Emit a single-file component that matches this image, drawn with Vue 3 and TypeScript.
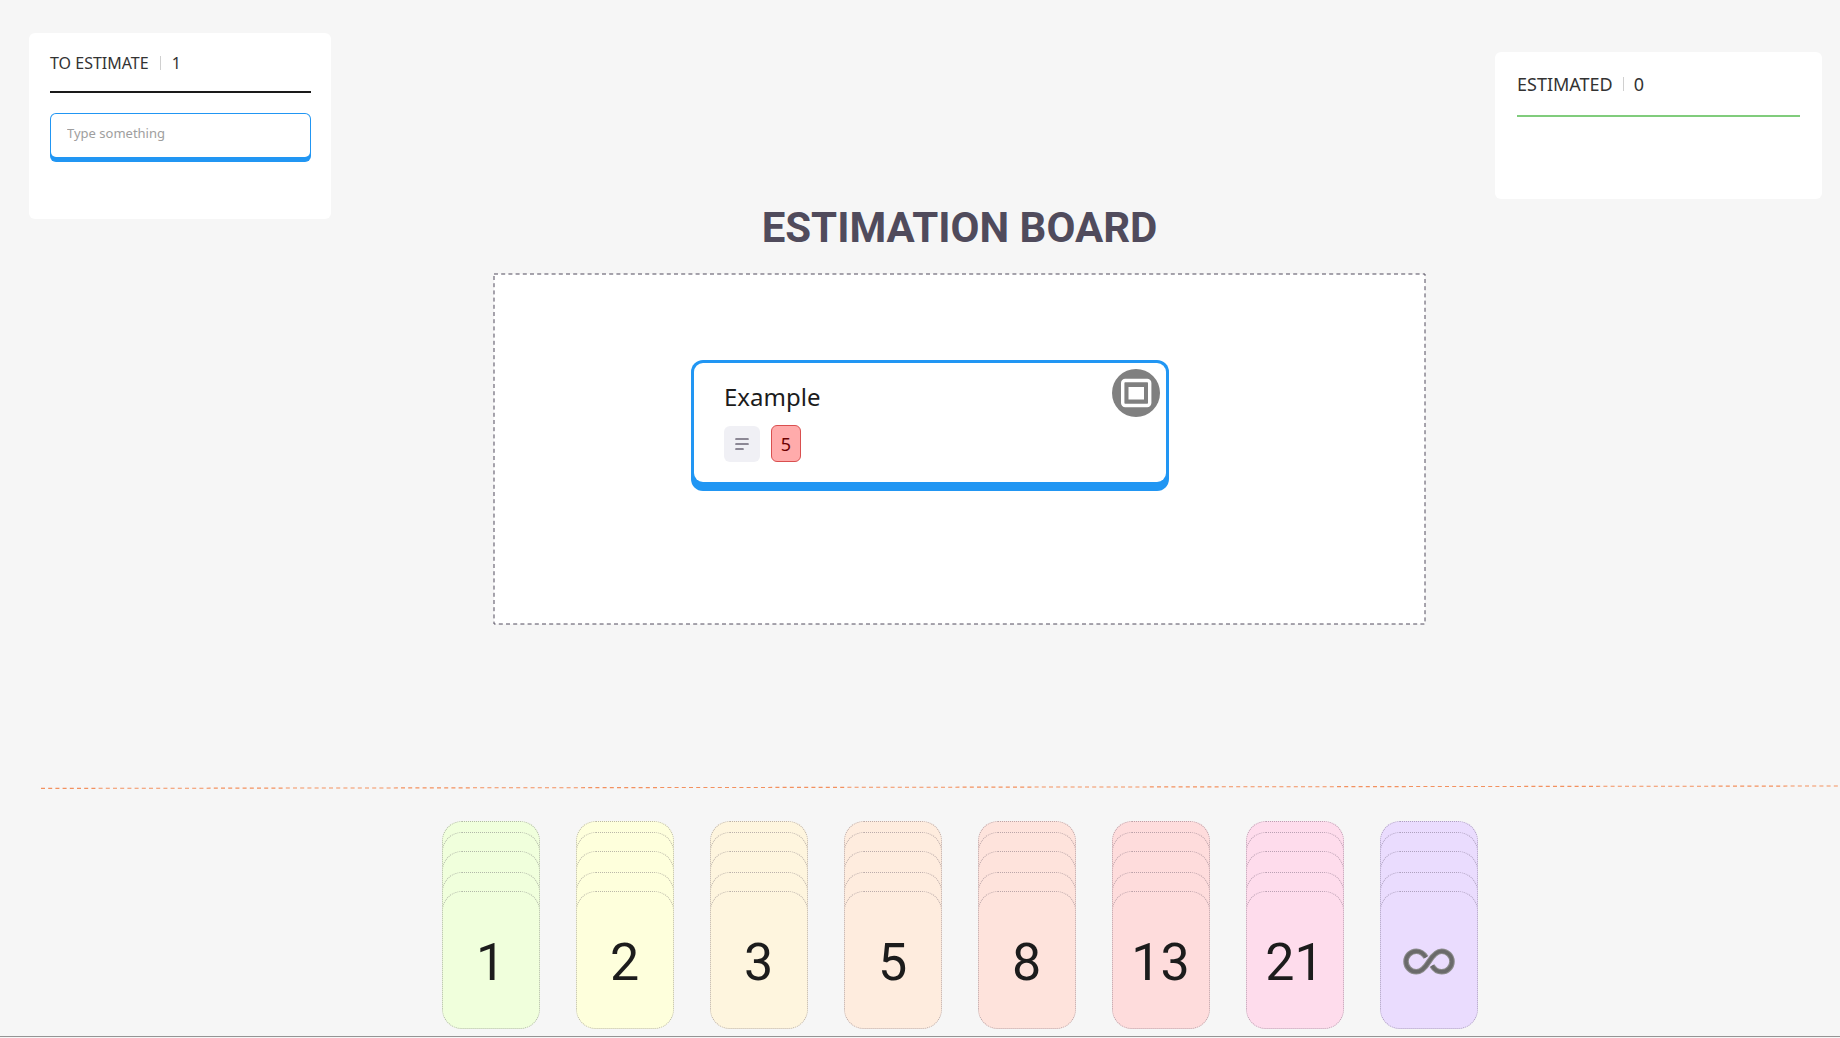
<script setup lang="ts">
import { ref } from 'vue'

interface Deck {
  label: string
  color: string
}

const draft = ref('')

const decks: Deck[] = [
  { label: '1', color: '#f0ffdc' },
  { label: '2', color: '#feffdc' },
  { label: '3', color: '#fef5de' },
  { label: '5', color: '#feecde' },
  { label: '8', color: '#fee3dc' },
  { label: '13', color: '#fedcdc' },
  { label: '21', color: '#fedcec' },
  { label: '∞', color: '#eadcfe' },
]
</script>

<template>
  <div class="page">
    <main class="top">
      <section class="panel todo">
        <h2 class="panel-head">
          <span>TO ESTIMATE</span><span class="sep"></span><span>1</span>
        </h2>
        <div class="field">
          <input v-model="draft" type="text" placeholder="Type something" aria-label="New item" />
        </div>
      </section>

      <section class="center">
        <h1>ESTIMATION BOARD</h1>
        <div class="board">
          <svg class="frame" aria-hidden="true">
            <rect width="100%" height="100%" />
          </svg>
          <article class="task">
            <div class="task-body">
              <div>
                <h3>Example</h3>
                <div class="chips">
                  <span class="chip">
                    <svg width="14" height="12" viewBox="0 0 14 12" aria-hidden="true">
                      <path d="M1 1H13M1 6H13M1 11H8" fill="none" stroke="#6b6676" stroke-width="1.7" stroke-linecap="round" />
                    </svg>
                  </span>
                  <span class="points">5</span>
                </div>
              </div>
              <button class="expand" type="button" aria-label="Open card">
                <svg width="48" height="48" viewBox="0 0 48 48" aria-hidden="true">
                  <circle cx="24" cy="24" r="24" fill="#808080" />
                  <rect x="10.7" y="11.5" width="27" height="25" rx="2.5" fill="none" stroke="#fff" stroke-width="3.4" />
                  <rect x="16.5" y="18" width="15.5" height="12.5" fill="#fff" />
                </svg>
              </button>
            </div>
          </article>
        </div>
      </section>

      <section class="panel done">
        <h2 class="panel-head">
          <span>ESTIMATED</span><span class="sep"></span><span>0</span>
        </h2>
      </section>
    </main>

    <svg class="divider" aria-hidden="true">
      <line x1="0" y1="3.4" x2="100%" y2="1" />
    </svg>

    <section class="decks">
      <div v-for="deck in decks" :key="deck.label" class="stack" :style="{ '--tint': deck.color }">
        <span class="sheet"></span>
        <span class="sheet second"></span>
        <span class="sheet third"></span>
        <span class="sheet fourth"></span>
        <button v-if="deck.label !== '∞'" class="sheet front" type="button">{{ deck.label }}</button>
        <button v-else class="sheet front" type="button" aria-label="Infinity">
          <svg width="52" height="30" viewBox="0 0 52 30" aria-hidden="true">
            <g fill="none">
              <path
                d="M23 9.4C20.6 5.4 17.4 3.2 13.3 3.2A10.3 10.3 0 0 0 13.3 23.8C18.6 23.8 22 20 26 13.5C30 7 33.4 3.2 38.7 3.2A10.3 10.3 0 0 1 38.7 23.8C34.6 23.8 31.4 21.6 29 17.6"
                stroke="#8c8c8c"
                stroke-width="5.6"
              />
              <path
                d="M23 9.4C20.6 5.4 17.4 3.2 13.3 3.2A10.3 10.3 0 0 0 13.3 23.8C18.6 23.8 22 20 26 13.5C30 7 33.4 3.2 38.7 3.2A10.3 10.3 0 0 1 38.7 23.8C34.6 23.8 31.4 21.6 29 17.6"
                stroke="#6a6a6a"
                stroke-width="3.4"
              />
            </g>
          </svg>
        </button>
      </div>
    </section>
  </div>
</template>

<style>
body {
  background: #f6f6f6;
}
</style>

<style scoped>
* {
  box-sizing: border-box;
}

.page {
  display: flex;
  flex-direction: column;
  min-height: 100vh;
  padding-bottom: 1px;
  background: #f6f6f6;
  font-family: "Noto Sans", sans-serif;
  color: #1c1c1c;
}

h1,
h2,
h3 {
  margin: 0;
}

.top {
  display: grid;
  grid-template-columns: 302px 1fr 327px;
  align-items: start;
  padding: 0 18px 0 29px;
}

.panel {
  background: #fff;
  border-radius: 6px;
}

.todo {
  margin-top: 33px;
  padding: 18px 20px 57px 21px;
  font-size: 16px;
}

.done {
  margin-top: 52px;
  padding: 20px 22px 82px;
  font-size: 18px;
}

.panel-head {
  display: flex;
  align-items: center;
  gap: 10px;
  font-size: inherit;
  font-weight: 400;
  line-height: 24px;
  color: #333;
}

.todo .panel-head {
  gap: 11px;
  padding-bottom: 16px;
  border-bottom: 2px solid #1a1a1a;
}

.done .panel-head {
  padding-bottom: 19px;
  border-bottom: 2px solid #80cc7c;
}

.sep {
  width: 1px;
  height: 14px;
  background: #d0d0d0;
}

.field {
  margin-top: 20px;
  padding: 1px 1px 5px;
  background: #2196f3;
  border-radius: 6px;
}

.field input {
  display: block;
  width: 100%;
  height: 43px;
  padding: 0 16px 6px;
  border: 0;
  border-radius: 5px;
  outline: 0;
  background: #fff;
  font-family: inherit;
  font-size: 13px;
  color: #333;
}

.field input::placeholder {
  color: #9e9e9e;
  opacity: 1;
}

.center {
  display: flex;
  flex-direction: column;
  align-items: center;
  padding: 203px 0 0 93px;
}

h1 {
  font-family: Roboto, sans-serif;
  font-size: 42px;
  font-weight: 700;
  line-height: 50px;
  color: #504b5c;
  white-space: nowrap;
}

.board {
  position: relative;
  width: 100%;
  max-width: 931px;
  margin-top: 21px;
  padding: 86px 0 133px;
  background: #fff;
}

.frame {
  position: absolute;
  inset: 0;
  width: 100%;
  height: 100%;
  overflow: visible;
}

.frame rect {
  fill: none;
  stroke: #504b5c;
  stroke-width: 1;
  stroke-dasharray: 4 3.2;
}

.task {
  position: relative;
  width: 478px;
  margin-left: 197px;
  padding: 3px 3px 9px;
  background: #2196f3;
  border-radius: 12px;
}

.task-body {
  display: flex;
  justify-content: space-between;
  align-items: flex-start;
  height: 119px;
  padding: 6px 6px 0 30px;
  background: #fff;
  border-radius: 9px;
}

h3 {
  margin-top: 12px;
  font-size: 24px;
  font-weight: 400;
  line-height: 32px;
}

.chips {
  display: flex;
  align-items: center;
  gap: 11px;
  margin-top: 12px;
}

.chip {
  display: grid;
  place-items: center;
  width: 36px;
  height: 36px;
  background: #f0f0f5;
  border-radius: 6px;
}

.points {
  display: grid;
  place-items: center;
  width: 30px;
  height: 37px;
  background: #ffabab;
  border: 1px solid #d94f4f;
  border-radius: 6px;
  font-size: 18px;
  color: #6b0000;
}

.expand {
  padding: 0;
  border: 0;
  background: none;
}

.expand svg {
  display: block;
}

.divider {
  flex: none;
  width: calc(100% - 41px);
  height: 5px;
  margin: 161px 0 0 41px;
}

.divider line {
  stroke: #f3915f;
  stroke-width: 1.1;
  stroke-dasharray: 4 3.2;
}

.decks {
  display: flex;
  justify-content: center;
  gap: 36px;
  margin-top: 31px;
  padding: 0 0 7px 79px;
  border-bottom: 1px solid #949494;
}

.stack {
  display: grid;
  grid-template-columns: 98px;
  align-items: start;
}

.sheet {
  grid-area: 1 / 1;
  height: 138px;
  background: var(--tint);
  border: 1px dotted rgba(70, 60, 80, 0.36);
  border-radius: 20px;
}

.second {
  margin-top: 11px;
}

.third {
  margin-top: 30px;
}

.fourth {
  margin-top: 51px;
}

.front {
  display: grid;
  place-items: center;
  margin: 70px 0 0;
  padding: 6px 0 0;
  font-family: Roboto, sans-serif;
  font-size: 52px;
  line-height: 60px;
  color: #1c1c1c;
}
</style>
